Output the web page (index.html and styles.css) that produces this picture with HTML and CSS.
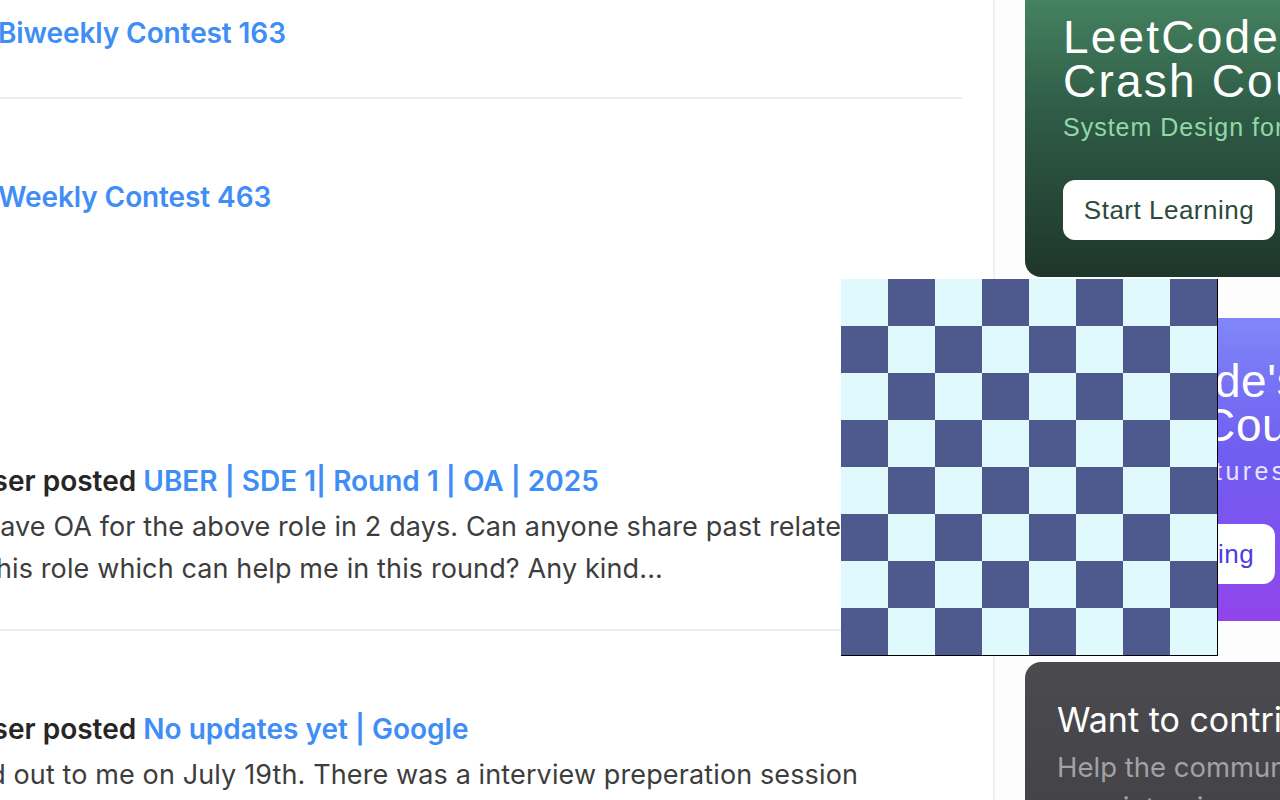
FILE: index.html
```html
<!DOCTYPE html>
<html lang="en">
<head>
<meta charset="utf-8">
<title>Discuss feed</title>
<link rel="stylesheet" href="styles.css">
</head>
<body>
<div class="page">
  <main class="feed">
    <article class="item item-first">
      <h3 class="contest-title"><a href="#">Biweekly Contest 163</a></h3>
    </article>
    <article class="item">
      <h3 class="contest-title"><a href="#">Weekly Contest 463</a></h3>
      <div class="contest-banner"></div>
      <div class="post">
        <p class="post-head"><span class="author">User</span> posted <a href="#">UBER | SDE 1| Round 1 | OA | 2025</a></p>
        <p class="excerpt excerpt-oa">I have OA for the above role in 2 days. Can anyone share past related OA for this role which can help me in this round? Any kind...</p>
      </div>
    </article>
    <article class="item">
      <div class="post">
        <p class="post-head"><span class="author">User</span> posted <a href="#">No updates yet | Google</a></p>
        <p class="excerpt excerpt-google">HR reached out to me on July 19th. There was a interview preperation session conducted by the team...</p>
      </div>
    </article>
  </main>
  <aside class="sidebar">
    <div class="cards">
      <section class="promo promo-green">
        <h2 class="promo-title">LeetCode's<br>Crash Course</h2>
        <p class="promo-sub">System Design for Interviews</p>
        <a class="promo-btn" href="#">Start Learning</a>
      </section>
      <section class="promo promo-purple">
        <h2 class="promo-title">LeetCode's<br>Crash Course</h2>
        <p class="promo-sub">Data Structures and Algorithms</p>
        <a class="promo-btn" href="#">Start Learning</a>
      </section>
      <section class="contribute">
        <h2 class="contribute-title">Want to contribute?</h2>
        <p class="contribute-text">Help the community by sharing your interview experience</p>
      </section>
    </div>
  </aside>
</div>
<div class="board" aria-hidden="true"></div>
</body>
</html>
```

FILE: styles.css
```css
html, body {
  margin: 0;
  padding: 0;
  width: 1280px;
  height: 800px;
  overflow: hidden;
  background: #ffffff;
}

body {
  font-family: Inter, "Noto Sans", sans-serif;
  position: relative;
}

.page {
  display: flex;
  align-items: stretch;
  min-height: 800px;
}

/* ---------- feed ---------- */
.feed {
  width: 962px;
  margin-right: 31px;
  flex: none;
}

.item {
  padding: 78px 0 39px;
  border-bottom: 2px solid #ededed;
}

.item-first {
  padding-top: 13px;
  padding-bottom: 44px;
}

.contest-title {
  margin: 0 0 0 -2px;
  font-size: 28px;
  line-height: 40px;
  font-weight: 600;
  letter-spacing: -0.1px;
}

a {
  color: #3f8ef6;
  text-decoration: none;
}

.contest-banner {
  height: 244px;
}

.post {
  margin-left: -28px;
}

.post-head {
  margin: 0;
  font-size: 28px;
  line-height: 40px;
  font-weight: 600;
  color: #262626;
  white-space: nowrap;
}

.excerpt {
  margin: 5px 0 0 15px;
  width: 988px;
  font-size: 27px;
  line-height: 42px;
  letter-spacing: 0.12px;
  color: #3d3d3d;
}

.excerpt-oa {
  text-indent: -18px;
}

.excerpt-google {
  text-indent: -132px;
}

/* ---------- sidebar ---------- */
.sidebar {
  flex: 1;
  border-left: 2px solid #eff0f1;
  padding-left: 30px;
  background: #fdfdfd;
}

.cards {
  margin-top: -26px;
  width: 300px;
}

.promo {
  box-sizing: border-box;
  height: 303px;
  margin-bottom: 41px;
  border-radius: 16px;
  padding: 41px 0 0 38px;
  font-family: "Liberation Sans", Arial, sans-serif;
  color: #ffffff;
}

.promo-green {
  background: linear-gradient(180deg, #4a8b66 0%, #2f5c46 45%, #1f362b 100%);
}

.promo-purple {
  background: linear-gradient(180deg, #8087f7 0%, #6f5ef1 45%, #9045eb 100%);
}

.promo-title {
  margin: 0;
  font-size: 46px;
  line-height: 44px;
  font-weight: 400;
  letter-spacing: 2.2px;
  white-space: nowrap;
}

.promo-purple .promo-title {
  letter-spacing: 0.6px;
}

.promo-sub {
  margin: 9px 0 0;
  font-size: 25px;
  line-height: 30px;
  letter-spacing: 1px;
  white-space: nowrap;
}

.promo-green .promo-sub {
  color: #90d8a9;
}

.promo-purple .promo-sub {
  color: #e6e4ff;
  letter-spacing: 3.4px;
}

.promo-btn {
  display: flex;
  align-items: center;
  justify-content: center;
  margin-top: 38px;
  width: 212px;
  height: 60px;
  border-radius: 12px;
  background: #ffffff;
  font-size: 26px;
  letter-spacing: 0.5px;
}

.promo-green .promo-btn {
  color: #2d4b3b;
}

.promo-purple .promo-btn {
  color: #4c3ce6;
}

.contribute {
  box-sizing: border-box;
  height: 303px;
  border-radius: 16px;
  padding: 38px 0 0 32px;
  background: linear-gradient(180deg, #4b4b4f 0%, #3c3c3f 100%);
}

.contribute-title {
  margin: 0;
  font-size: 34px;
  line-height: 40px;
  font-weight: 400;
  color: #ffffff;
  white-space: nowrap;
}

.contribute-text {
  margin: 7px 0 0;
  font-size: 27.5px;
  line-height: 40px;
  color: #a1a1a6;
  width: 420px;
}

/* ---------- overlay board ---------- */
.board {
  position: absolute;
  left: 841px;
  top: 279px;
  width: 376px;
  height: 376px;
  border-right: 1px solid #000000;
  border-bottom: 1px solid #000000;
  background: repeating-conic-gradient(#4e5a8e 0 25%, #dff9fd 0 50%) 0 0 / 94px 94px;
}
```
